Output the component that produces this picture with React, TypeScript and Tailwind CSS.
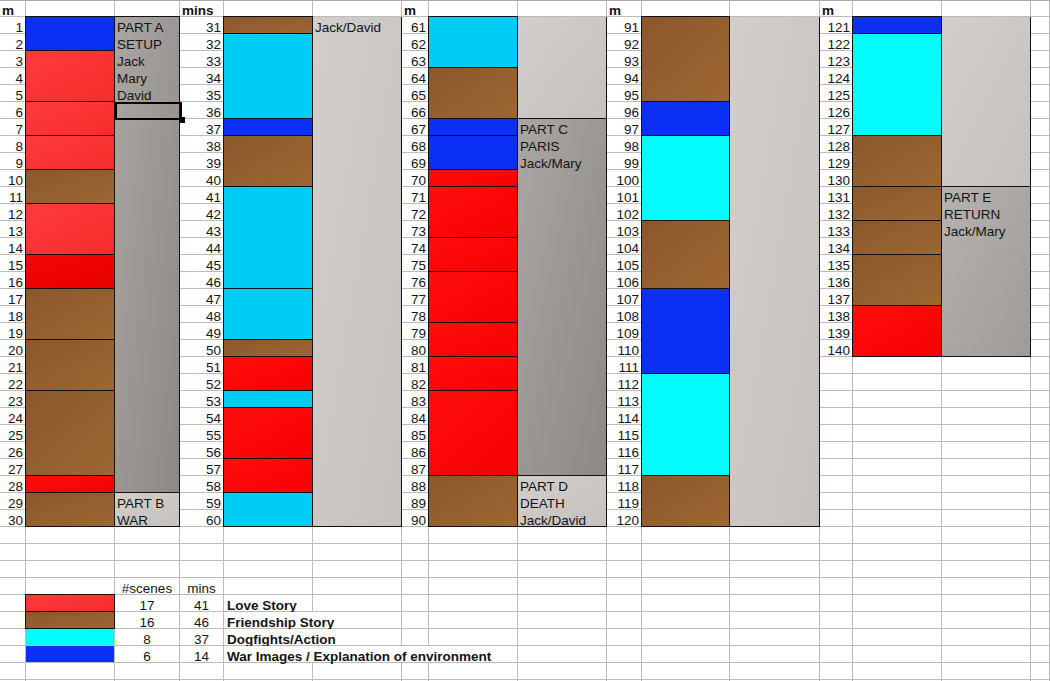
import type { CSSProperties, ReactNode } from "react";

const LINE = "border-[#bcbcbc]";

const FILL = {
  blue: "bg-[#0b30f4]",
  red: "bg-linear-to-br from-[#ff0d0d] to-[#f70101]",
  deepRed: "bg-linear-to-br from-[#f50707] to-[#e80000]",
  pink: "bg-linear-to-br from-[#ff3b3b] to-[#f52c2c]",
  brown: "bg-linear-to-br from-[#8b582b] to-[#9d6733]",
  sky: "bg-[#00cdf5]",
  cyan: "bg-[#00fcfc]",
  dark: "bg-linear-to-br from-[#aaa6a3] to-[#8c8885]",
  mid: "bg-linear-to-br from-[#b5b2af] to-[#9f9b98]",
  light: "bg-linear-to-br from-[#d1cecb] to-[#c4c1be]",
};

type Block = {
  col: number;
  from: number;
  to: number;
  fill: string;
  lines?: string[];
  noTop?: boolean;
};

// rows are 1..30 inside each section
const blocks: Block[] = [
  // section 1
  { col: 2, from: 1, to: 2, fill: FILL.blue },
  { col: 2, from: 3, to: 5, fill: FILL.pink },
  { col: 2, from: 6, to: 7, fill: FILL.pink },
  { col: 2, from: 8, to: 9, fill: FILL.pink },
  { col: 2, from: 10, to: 11, fill: FILL.brown },
  { col: 2, from: 12, to: 14, fill: FILL.pink },
  { col: 2, from: 15, to: 16, fill: FILL.deepRed },
  { col: 2, from: 17, to: 19, fill: FILL.brown },
  { col: 2, from: 20, to: 22, fill: FILL.brown },
  { col: 2, from: 23, to: 27, fill: FILL.brown },
  { col: 2, from: 28, to: 28, fill: FILL.red },
  { col: 2, from: 29, to: 30, fill: FILL.brown },
  { col: 3, from: 1, to: 28, fill: FILL.dark, lines: ["PART A", "SETUP", "Jack", "Mary", "David"] },
  { col: 3, from: 29, to: 30, fill: FILL.light, lines: ["PART B", "WAR"] },
  // section 2
  { col: 5, from: 1, to: 1, fill: FILL.brown },
  { col: 5, from: 2, to: 6, fill: FILL.sky },
  { col: 5, from: 7, to: 7, fill: FILL.blue },
  { col: 5, from: 8, to: 10, fill: FILL.brown },
  { col: 5, from: 11, to: 16, fill: FILL.sky },
  { col: 5, from: 17, to: 19, fill: FILL.sky },
  { col: 5, from: 20, to: 20, fill: FILL.brown },
  { col: 5, from: 21, to: 22, fill: FILL.red },
  { col: 5, from: 23, to: 23, fill: FILL.sky },
  { col: 5, from: 24, to: 26, fill: FILL.red },
  { col: 5, from: 27, to: 28, fill: FILL.red },
  { col: 5, from: 29, to: 30, fill: FILL.sky },
  { col: 6, from: 1, to: 30, fill: FILL.light, lines: ["Jack/David"], noTop: true },
  // section 3
  { col: 8, from: 1, to: 3, fill: FILL.sky },
  { col: 8, from: 4, to: 6, fill: FILL.brown },
  { col: 8, from: 7, to: 7, fill: FILL.blue },
  { col: 8, from: 8, to: 9, fill: FILL.blue },
  { col: 8, from: 10, to: 10, fill: FILL.red },
  { col: 8, from: 11, to: 13, fill: FILL.red },
  { col: 8, from: 14, to: 15, fill: FILL.red },
  { col: 8, from: 16, to: 18, fill: FILL.red },
  { col: 8, from: 19, to: 20, fill: FILL.red },
  { col: 8, from: 21, to: 22, fill: FILL.red },
  { col: 8, from: 23, to: 27, fill: FILL.red },
  { col: 8, from: 28, to: 30, fill: FILL.brown },
  { col: 9, from: 1, to: 6, fill: FILL.light, noTop: true },
  { col: 9, from: 7, to: 27, fill: FILL.dark, lines: ["PART C", "PARIS", "Jack/Mary"] },
  { col: 9, from: 28, to: 30, fill: FILL.light, lines: ["PART D", "DEATH", "Jack/David"] },
  // section 4
  { col: 11, from: 1, to: 5, fill: FILL.brown },
  { col: 11, from: 6, to: 7, fill: FILL.blue },
  { col: 11, from: 8, to: 12, fill: FILL.cyan },
  { col: 11, from: 13, to: 16, fill: FILL.brown },
  { col: 11, from: 17, to: 21, fill: FILL.blue },
  { col: 11, from: 22, to: 27, fill: FILL.cyan },
  { col: 11, from: 28, to: 30, fill: FILL.brown },
  { col: 12, from: 1, to: 30, fill: FILL.light, noTop: true },
  // section 5
  { col: 14, from: 1, to: 1, fill: FILL.blue },
  { col: 14, from: 2, to: 7, fill: FILL.cyan },
  { col: 14, from: 8, to: 10, fill: FILL.brown },
  { col: 14, from: 11, to: 12, fill: FILL.brown },
  { col: 14, from: 13, to: 14, fill: FILL.brown },
  { col: 14, from: 15, to: 17, fill: FILL.brown },
  { col: 14, from: 18, to: 20, fill: FILL.red },
  { col: 15, from: 1, to: 10, fill: FILL.light, noTop: true },
  { col: 15, from: 11, to: 20, fill: FILL.mid, lines: ["PART E", "RETURN", "Jack/Mary"] },
];

const headers: Record<number, string> = { 1: "m", 4: "mins", 7: "m", 10: "m", 13: "m" };

const legend = [
  { fill: FILL.pink, boxed: true, scenes: 17, mins: 41, label: "Love Story", span: 1 },
  { fill: FILL.brown, boxed: true, scenes: 16, mins: 46, label: "Friendship Story", span: 2 },
  { fill: FILL.cyan, boxed: false, scenes: 8, mins: 37, label: "Dogfights/Action", span: 2 },
  { fill: FILL.blue, boxed: false, scenes: 6, mins: 14, label: "War Images / Explanation of environment", span: 4 },
];

const at = (row: number, col: number | string): CSSProperties => ({ gridRow: row, gridColumn: col });

function cellText(r: number, c: number): ReactNode {
  if (r === 1 && headers[c]) return <div className="pl-[2px] pt-[2px] font-bold leading-[16px]">{headers[c]}</div>;
  if (r >= 2 && r <= 31 && c <= 13 && c % 3 === 1) {
    const section = (c - 1) / 3;
    const d = r - 1;
    if (section === 4 && d > 20) return null;
    return <div className="pr-[2px] pt-[3px] text-right leading-[16px]">{section * 30 + d}</div>;
  }
  if (r === 35 && c === 3) return <div className="pt-[3px] text-center leading-[16px]">#scenes</div>;
  if (r === 35 && c === 4) return <div className="pt-[3px] text-center leading-[16px]">mins</div>;
  if (r >= 36 && r <= 39 && (c === 3 || c === 4)) {
    const item = legend[r - 36];
    return <div className="pt-[3px] text-center leading-[16px]">{c === 3 ? item.scenes : item.mins}</div>;
  }
  return null;
}

export default function App() {
  const cells: ReactNode[] = [];
  for (let r = 1; r <= 41; r++) {
    for (let c = 1; c <= 16; c++) {
      cells.push(
        <div
          key={`${r}-${c}`}
          style={at(r, c)}
          className={`border-r border-b ${LINE} bg-white ${r === 1 ? "border-t border-t-[#a9a9a9]" : ""}`}
        >
          {cellText(r, c)}
        </div>,
      );
    }
  }

  return (
    <div className="h-[681px] w-[1050px] overflow-hidden bg-white font-['Liberation_Sans',Arial,sans-serif] text-[13.5px] text-[#141414]">
      <div className="grid grid-cols-[26px_89px_65px_44px_89px_89px_27px_89px_89px_35px_88px_90px_33px_89px_89px_19px] grid-rows-[repeat(41,17px)]">
        {cells}

        {blocks.map((b, i) => (
          <div
            key={`b${i}`}
            style={{ gridColumn: b.col, gridRow: `${b.from + 1} / ${b.to + 2}` }}
            className={`${b.fill} -ml-px flex flex-col border border-[#111] ${b.noTop ? "border-t-0" : "-mt-px"}`}
          >
            {b.lines?.map((t) => (
              <div key={t} className="h-[17px] shrink-0 whitespace-nowrap pl-[2px] pt-[3px] leading-[16px]">
                {t}
              </div>
            ))}
          </div>
        ))}

        {legend.map((item, i) => (
          <div
            key={`s${i}`}
            style={at(36 + i, 2)}
            className={
              item.boxed
                ? `${item.fill} -ml-px -mt-px border border-[#111]`
                : `${item.fill} border-r border-b ${LINE}`
            }
          />
        ))}

        {legend.map((item, i) => (
          <div
            key={`l${i}`}
            style={at(36 + i, `5 / span ${item.span}`)}
            className={`border-r border-b ${LINE} bg-white whitespace-nowrap pl-[3px] pt-[3px] font-bold leading-[16px]`}
          >
            {item.label}
          </div>
        ))}

        {/* active cell */}
        <div style={at(7, 3)} className="relative -mr-[2px] -mb-px border-2 border-black">
          <div className="absolute -right-[5px] -bottom-[5px] h-[6px] w-[6px] bg-black" />
        </div>
      </div>
    </div>
  );
}
